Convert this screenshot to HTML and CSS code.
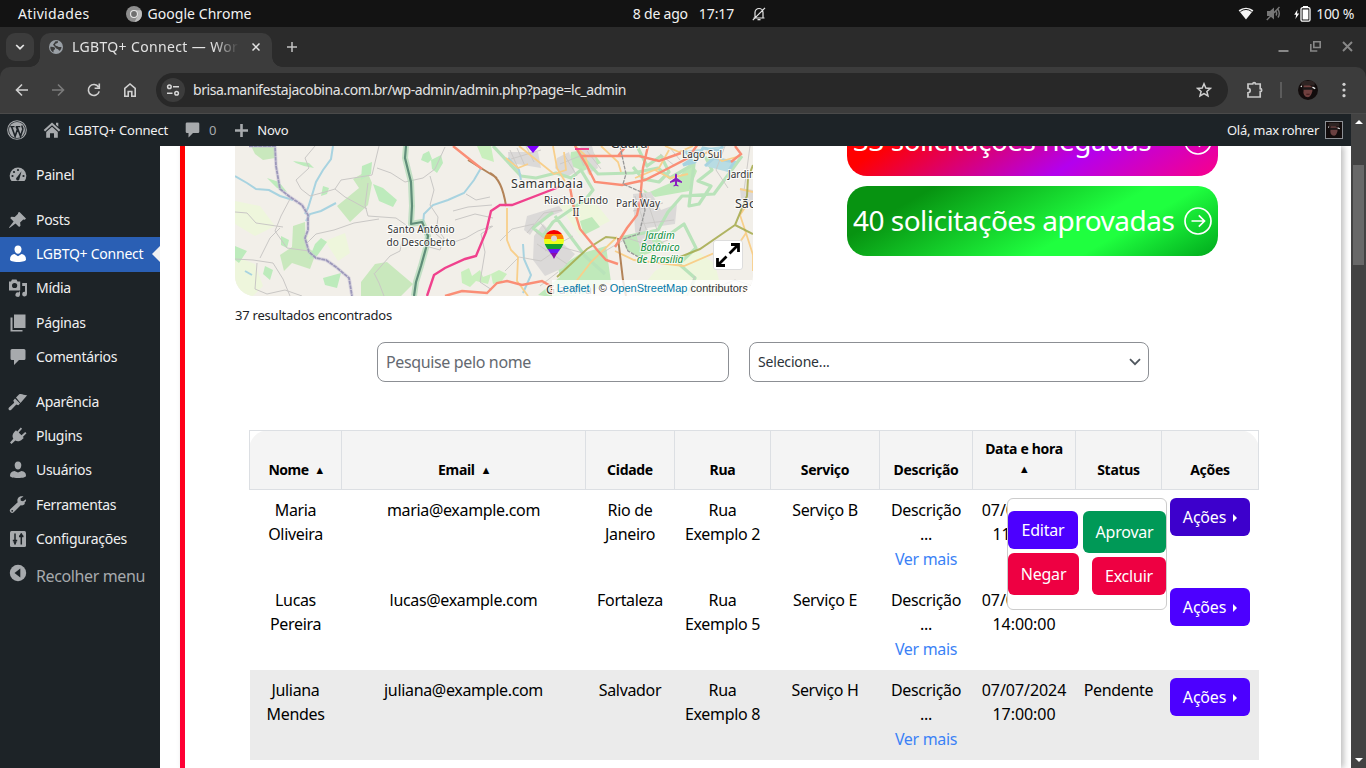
FILE: index.html
```html
<!DOCTYPE html>
<html lang="pt-BR">
<head>
<meta charset="utf-8">
<title>LGBTQ+ Connect</title>
<link rel="stylesheet" href="styles.css">
</head>
<body>
<div class="screen">
  <header class="desktop-bar">
    <div class="db-left">
      <span class="activities">Atividades</span>
      <svg width="16" height="16" viewBox="0 0 16 16"><circle cx="8" cy="8" r="8" fill="#8d8d8d"/><path d="M8 4.2h7A8 8 0 0 1 8.5 16L12 9.5A4 4 0 0 0 8 4.2z" fill="#bdbdbd"/><circle cx="8" cy="8" r="4" fill="#e8e8e8"/><circle cx="8" cy="8" r="2.9" fill="#6f6f6f"/></svg>
      <span class="app-name">Google Chrome</span>
    </div>
    <div class="db-center">
      <span>8 de ago</span><span class="clock">17:17</span>
      <svg width="14" height="14" viewBox="0 0 14 14" fill="none" stroke="#e6e6e6" stroke-width="1.2"><path d="M1.5 11h11M3 10.5V5.5a4 4 0 0 1 8 0v5M.8 13.2 13 .8"/><path d="M5.5 12h3v1.3h-3z" fill="#e6e6e6" stroke="none"/></svg>
    </div>
    <div class="db-right">
      <svg width="16" height="13" viewBox="0 0 16 13"><path d="M8 12.5.6 3.2a12 12 0 0 1 14.8 0z" fill="#f4f4f4"/><path d="M2.400 4.500a9.500 9.500 0 0 1 11.200 0" stroke="#131313" stroke-width="1" fill="none"/></svg>
      <svg class="mute" width="16" height="15" viewBox="0 0 16 15"><path d="M1 5h3l4-3.500v12L4 10H1z" fill="#777"/><path d="M10 5.500q1.300 2 0 4M12 3.500q2.600 4 0 8M.8 14 13.500 1" fill="none" stroke="#777" stroke-width="1.400"/></svg>
      <svg class="batt" width="17" height="16" viewBox="0 0 17 16"><path d="M3.600 3.500.2 8.800h2L1.400 13l3.800-5.400H3z" fill="#fff"/><path d="M9 0h5v2H9z" fill="#fff"/><rect x="7" y="1.700" width="9" height="13.500" rx="1.500" fill="none" stroke="#fff" stroke-width="1.300"/><rect x="8.600" y="3.500" width="5.800" height="10" fill="#fff"/></svg>
      <span>100 %</span>
    </div>
  </header>

  <div class="tab-strip">
    <button class="tab-search"><svg width="10" height="6" viewBox="0 0 10 6"><path d="m1.200 1 3.800 3.700L8.800 1" fill="none" stroke="#e3e3e3" stroke-width="1.700"/></svg></button>
    <div class="tab">
      <svg width="14" height="14" viewBox="0 0 14 14"><circle cx="7" cy="7" r="7" fill="#9aa0a6"/><path d="M1.300 6.800c3-.3 5.200.6 4.700 2.200-.3 1-1.500.9-1.500 1.800v1.700C2.300 11.500 1 9.400 1.300 6.800zM6.500 1.300H9c.3 1.500-.6 2-1.800 2.100C6 3.600 6 4.500 6.300 5.300c.6 1 2 .6 3 1.400.7.500 1.700.2 3.200.2-.1 1.700-.9 3-1.800 3.800-.9.100-1.100-1.600-2.400-1.700C7 8.900 5.500 6.200 4 4.800z" fill="#3c3c3c"/></svg>
      <span class="tab-title">LGBTQ+ Connect — Word</span>
      <svg width="8" height="8" viewBox="0 0 8 8"><path d="m.5.5 7 7m0-7-7 7" stroke="#e3e3e3" stroke-width="1.500"/></svg>
    </div>
    <svg class="plus" width="12" height="12" viewBox="0 0 12 12"><path d="M6 1v10M1 6h10" stroke="#c4c4c4" stroke-width="1.500"/></svg>
    <div class="win">
      <svg width="11" height="12" viewBox="0 0 11 12"><path d="M.5 10h10" stroke="#888" stroke-width="2"/></svg>
      <svg width="11" height="11" viewBox="0 0 11 11" fill="none" stroke="#888" stroke-width="1.600"><path d="M3.800.8h6.400v5.700H3.800zM.8 3v7h6.500"/></svg>
      <svg width="11" height="11" viewBox="0 0 11 11"><path d="m1 1 9 9m0-9-9 9" stroke="#888" stroke-width="1.900"/></svg>
    </div>
  </div>

  <div class="toolbar">
    <svg class="nav" viewBox="0 0 16 16"><path d="M14 8H2.500M8 2.500 2.500 8 8 13.500"/></svg>
    <svg class="nav off" viewBox="0 0 16 16"><path d="M2 8h11.500M8 2.500 13.500 8 8 13.500"/></svg>
    <svg class="nav" viewBox="0 0 16 16"><path d="M13.200 9.400A5.500 5.500 0 1 1 12.500 5M13.300 1.500v4.800H8.600"/></svg>
    <svg class="nav" viewBox="0 0 16 16"><path d="M2.800 6.300 8 2l5.200 4.300v7.900h-3.400V9.500H6.200v4.700H2.800z"/></svg>
    <div class="omnibox">
      <span class="site"><svg width="14" height="12" viewBox="0 0 14 12" fill="none" stroke="#d8d8d8" stroke-width="1.500"><circle cx="3.400" cy="2.800" r="1.800"/><path d="M7 2.800h6M1 9.200h5.500"/><circle cx="10.600" cy="9.200" r="1.800"/></svg></span>
      <span class="url">brisa.manifestajacobina.com.br/wp-admin/admin.php?page=lc_admin</span>
      <svg width="16" height="16" viewBox="0 0 16 16"><path d="m8 1.800 1.800 4.200 4.600.4-3.500 3 1.100 4.500L8 11.500 4 13.900l1.100-4.500-3.500-3L6.200 6z" fill="none" stroke="#d0d0d0" stroke-width="1.500"/></svg>
    </div>
    <svg class="ext" width="18" height="18" viewBox="0 0 18 18"><path d="M2 3h4.700a1.400 1.400 0 0 1 2.800 0h4.700v4.700a1.500 1.500 0 0 1 0 3V16H2v-4.200a2.200 2.200 0 0 0 0-4.400z" fill="none" stroke="#c9c9c9" stroke-width="1.700"/></svg>
    <i class="sep"></i>
    <span class="face round"><svg viewBox="0 0 18 18"><path d="M0 0h18v18H0z" fill="#120c0c"/><path d="M5 5q4-3 7.500 1l.5 4q-1.500 5.500-4 5.500T5.500 13.500 5 9z" fill="#70403f"/><path d="M3 1h12v4H3z" fill="#2e2423"/><path d="M4 6.500h9v2.300H4z" fill="#1d1819"/><path d="M13 6.500l2.500 1.200M2.500 5.500l1 .5" stroke="#eee" stroke-width="1.300"/><path d="M7.500 12.800h3" stroke="#3f1a1b"/></svg></span>
    <svg class="kebab" width="4" height="16" viewBox="0 0 4 16" fill="#d0d0d0"><circle cx="2" cy="2.300" r="1.600"/><circle cx="2" cy="8" r="1.600"/><circle cx="2" cy="13.700" r="1.600"/></svg>
  </div>

  <div class="page">
    <div class="viewport">
      <div class="wp-bar">
        <svg width="20" height="20" viewBox="0 0 20 20"><circle cx="10" cy="10" r="9.300" fill="none" stroke="#a7aaad" stroke-width="1.100"/><circle cx="10" cy="10" r="8" fill="#a7aaad"/><path d="M3.300 6.600h4.200M8.800 6.600h4.500" stroke="#1d2327" stroke-width="1.200"/><path d="m4.600 6.800 3.500 9.500 2.300-6.800-1.100-2.700M10 6.800l3.500 9.500 2.200-6.500c.6-2-.9-2.500-.8-4.300" stroke="#1d2327" stroke-width="1.600" fill="none"/></svg>
        <svg class="home" width="18" height="18" viewBox="0 0 18 18" fill="#a7aaad"><path d="M9 1.500 17.300 9l-1.400 1.400L9 4.200l-6.900 6.200L.7 9zM13 1.800h2.300v4L13 3.800z"/><path d="M9 5.800 14.800 11v5.800H11v-4.500H7v4.500H3.200V11z"/></svg>
        <span class="wp-site">LGBTQ+ Connect</span>
        <svg class="cm" width="15" height="16" viewBox="0 0 15 16" fill="#a7aaad"><path d="M2 .5h11q1.300 0 1.300 1.300v7.900Q14.300 11 13 11H8l-4.500 4.500V11H2Q.7 11 .7 9.700V1.800Q.7.5 2 .5z"/></svg>
        <span class="cnt">0</span>
        <svg class="add" width="13" height="13" viewBox="0 0 13 13"><path d="M6.500 0v13M0 6.500h13" stroke="#a7aaad" stroke-width="2.600"/></svg>
        <span class="wp-new">Novo</span>
        <span class="hello">Olá, max rohrer</span>
        <span class="face square"><svg viewBox="0 0 18 18"><path d="M0 0h18v18H0z" fill="#120c0c"/><path d="M5 5q4-3 7.500 1l.5 4q-1.500 5.500-4 5.500T5.500 13.500 5 9z" fill="#6b4040"/><path d="M3 1h12v4H3z" fill="#2e2423"/><path d="M4 6.500h9v2.300H4z" fill="#1d1819"/><path d="M13 6.500l2.500 1.200M2.500 5.500l1 .5" stroke="#eee" stroke-width="1.300"/></svg></span>
      </div>

      <div class="wp-body">
        <nav class="side">
          <a class="gap"><svg viewBox="0 0 20 20"><path d="M3.500 16A8.300 8.300 0 1 1 16.500 16z"/><g fill="#1d2327"><circle cx="4.500" cy="11" r="1.100"/><circle cx="6" cy="7" r="1.100"/><circle cx="10" cy="5" r="1.100"/><circle cx="15.500" cy="11" r="1.100"/><path d="m13.500 6.300-2 7.500a1.700 1.700 0 1 1-2.500-1.500z"/></g></svg>Painel</a>
          <a><svg viewBox="0 0 20 20"><path d="m11.500 2 6.500 6.500-1.200 1.200-1.500-.3-3.200 3.200.4 3.200-1.400 1.200-3.600-3.600L1.500 18 1 17.500l4.600-6L2.200 8l1.200-1.300 3.300.4 3.400-3.400-.2-1z"/></svg>Posts</a>
          <a class="on"><svg viewBox="0 0 20 20"><path d="M10 1.500c2.400 0 3.700 1.800 3.500 4-.2 2.600-1.500 4.300-3.500 4.300S6.700 8.100 6.500 5.500c-.2-2.200 1.100-4 3.500-4zM6.500 10 10 12.200l3.500-2.200c3 .3 4.500 2.300 4.500 5.500 0 1.500-3 2.500-8 2.500s-8-1-8-2.500c0-3.200 1.500-5.200 4.500-5.500z"/></svg>LGBTQ+ Connect</a>
          <a><svg viewBox="0 0 20 20"><path d="M1 3.500h2L4 1.500h4.500l1 2h2.700v9H1zM14.200 5H19v11a2.400 2.400 0 1 1-2-2.300V8h-2.800zM12 13v4a2.300 2.300 0 1 1-1.500-2.600z"/><circle cx="6.600" cy="7.500" r="2.600" fill="#1d2327"/></svg>Mídia</a>
          <a><svg viewBox="0 0 20 20"><path d="M6 1.500h11.500V15H6zM2.500 4.500h2V17h10v1.500h-12z"/></svg>Páginas</a>
          <a class="gap"><svg viewBox="0 0 20 20"><path d="M4 2h12q1.500 0 1.500 1.500v8Q17.500 13 16 13h-5l-5 5v-5H4q-1.500 0-1.500-1.500v-8Q2.500 2 4 2z"/></svg>Comentários</a>
          <a><svg viewBox="0 0 20 20"><path d="m8 5.500 3.200-3.200c3.200-1 5.300 1.500 8 1L12.500 11zM7 6.500l5 5-1.700 1.700-2-.7-5 5.300q-1.500 1-2.500 0-.8-1.300.2-2.300l5.200-4.800-.9-2.300z"/></svg>Aparência</a>
          <a><svg viewBox="0 0 20 20"><path d="m12.800 1.500 1.300 1.300-3.400 3.700 2.800 2.800 3.700-3.400 1.300 1.300-3.700 3.700 1 1-1.500 1.400c-2.300 2.300-5 2.600-7 1.300L3.500 18 2 16.500l3.300-3.800C4 10.500 4.300 8 6.500 5.700L8 4.300l1.200 1.200z"/></svg>Plugins</a>
          <a><svg viewBox="0 0 20 20"><path d="M10 1.500c2.400 0 3.500 1.800 3.300 4-.2 2.500-1.400 4-3.300 4s-3.100-1.500-3.300-4c-.2-2.200.9-4 3.300-4zM6.500 11 10 12.500l3.500-1.500c3 .3 4.500 2 4.500 4.700 0 1.300-3 2.300-8 2.300s-8-1-8-2.300C2 13 3.500 11.300 6.500 11z"/></svg>Usuários</a>
          <a><svg viewBox="0 0 20 20"><path d="M16.700 7.300c1-.8 1.500-1.500 1.300-3l-3 2-2.200-.6L12.500 3.500l3-1.900c-2-.7-4.300-.2-5.500 1.700-.8 1.300-.8 2.700-.3 4L2.500 14a2.300 2.300 0 0 0 3.200 3.300l7-7c1.500.4 3 0 4-1.200z"/><circle cx="4.200" cy="15.800" r=".9" fill="#1d2327"/></svg>Ferramentas</a>
          <a><svg viewBox="0 0 20 20"><path d="M3.500 2h13Q18 2 18 3.500v13q0 1.500-1.500 1.500h-13Q2 18 2 16.500v-13Q2 2 3.500 2z"/><path d="M7 4.500v11M4.800 11.500h4.400M13.300 4.500v11M11 7.500h4.500" stroke="#1d2327" stroke-width="1.500"/><path d="m5 12.500 2 3 2-3zM11 7l2.300-3 2.200 3z" fill="#1d2327"/></svg>Configurações</a>
          <a class="collapse"><svg viewBox="0 0 20 20"><circle cx="10" cy="10" r="8.200"/><path d="M12.300 5.500v9L6.500 10z" fill="#1d2327"/></svg>Recolher menu</a>
        </nav>

        <main class="main">
          <section class="panel">
            <div class="overview">
              <div class="map">
                <svg width="518" height="150" viewBox="0 0 518 150">
                  <rect width="518" height="150" fill="#f2efe9"/>
                  <g fill="#eef6dc">
                    <path d="M0 55 25 60 40 80 20 90 0 78zM90 95l20-8 5 20-12 8zM0 110l20 8 8 22-10 10H0zM420 125l40-22 20 15 8 32H400zM325 60l30-10 20 25-30 15zM60 85l14 4-4 20-12-6z"/>
                  </g>
                  <g fill="#c9e8bd">
                    <path d="M16 0h24v12l-12 2-8-6zM102 60l22-18-6-9 14-8 5 12-4 22-18 17zM58 80l12-4 1 25 10 6-6 16-18-6-8 8-4-16 12-8zM140 118l12-2 26 22-12 12h-40v-14z"/>
                    <path d="M127 20l10-4-1 12-10 6zM138 38l10 4 14 12-4 7-14-6zM88 132l18-5-4 15-12-3zM0 100l12 5-8 12-4-3zM58 15l16 2 5 5-10-2-8-3zM80 98l6-6 6 4-10 14-8 3zM32 32l12 4 8 10-10-4zM46 90l8 4-2 8-6-3zM188 8l6-3 3 8-4 4-7-3zM196 14l10-5 2 8-6 10-5-4zM30 120l8 4-3 10-7-6zM88 40l6 2-2 6-6 2z" fill="#bdebbc"/>
                  </g>
                  <g fill="#bfe9ba">
                    <path d="M323 122l22-14 26-8 5 36-24 12-30 4-19-3 22-18zM345 75l12-4 8 10-16 8zM336 6l20-3 10 14-18 8-14-6zM410 48l30-13 16-18 6 8-8 20-34 6-12-8zM387 92l30-4 12 9-14 10 -12 4-12-8z"/>
                    <path d="M226 126l8-4 3 8 8-6 3 7 8-3-3 10-12-3-6 6-8-4zM256 128l8-4 8 4-6 8-8 2zM242 0h14l3 16-12-4z" fill="#c9efbd"/>
                  </g>
                  <g fill="#dbd9d8">
                    <path d="M273 6h30l3 16-18-3-14-2zM322 12l12-6 6 20-10 6-10-10zM308 78l18 18 14 12-12 14-18 8-12-16 1-24zM398 48l18-2 10 18 16-6-2 20-28 4 8 20-14 3-6-20zM292 70l32-10 4 5-24 10-9 14-6-5zM345 0h12l6 22-10 6zM505 42l13 2v14l-12-4z"/>
                  </g>
                  <g fill="none" stroke="#b9e3ba" stroke-width="3.200" stroke-linejoin="round">
                    <path d="M258 0l28 30 15 2 20-5 15 5 10-8 12 20-8 10-32 22-10 14-10-8 20-16M320 70l30 40 20 18M345 8l18 20 35-1 25-5 12 10 24-14-5 42 10-2 12-18-13-5 14-11-6-12 26 8M385 92l38-8 10-18 14-16 32-2 28-38M435 88l14-10 12 24-17 16 16 14-6 14"/>
                    <path d="M402 0l10 20 14-10 8 16-10 10-16-3-10-12"/>
                  </g>
                  <g fill="none" stroke="#a8d3e0" stroke-width="2">
                    <path d="M98 0 96 13 88 24 81 36 78 46 73 62 70 68M0 30 12 37 21 43 34 44 45 50 58 54M101 57 86 65 75 68 71 75M246 22 239 34 229 47 213 54 198 59 189 68 188 78M273 12l11 12 2 10M288 98l1 15 7 16-8 18M10 125l7 4"/>
                  </g>
                  <path d="m450 5 7 8-9 6 12-3 8-14 16 3 4-5M470 20l9-8 20 4-6 10" fill="#b8dce3" stroke="#a8d3e0" stroke-width="3"/>
                  <g fill="none" stroke="#c9c7c5" stroke-width="1">
                    <path d="M80 0 70 12 74 22 61 34 66 43 75 50 90 46 100 43 106 34 137 29 144 0M133 37l-3 22 3 11 28 2 10 7M142 22l14 5 14 9 18-4 12-9 10-22M100 43l10 8 22 12M0 66l12 1 9 10 27 4M55 53 46 70l-6 15 12 17 22 3M71 98l10-10 18-4 20-7 25-4M25 112l10-20 10-10M0 113l18 1 20 3 10 16 7 17M22 117l-2 26 12 5 18-4 17 6M140 127l15-17 10-5 2-10M139 127l5 10 5 13M195 30l4 14-4 15 8 12-2 17 12 10 18-6 12-7 14-5M218 65l15-4 24-2M220 74l20-6 18 4M200 80l9 12-4 12-14-4M258 80l-12 8 4 18-5 30 12 8M231 48l10 6 14-3"/>
                    <path d="M275 4l8 18M282 2l8 18M291 0l8 16M276 13l30-9M330 10l12 20M325 18l20-8M340 0l9 20M300 85l25 20M304 75l22 28M310 105l28-15M302 98l30 20M400 50l15 45M410 48l12 36M398 65l30-8M405 78l34-4M415 93l15-4M425 8l15 12M435 2l10 12M352 5l14 18M292 87l17-20 18-3M265 95l12-12 22-5M270 125l14-14 22 4 20-14 22 6M305 140l18-14M362 110l30-18 25 8 16-6M460 130l-8 20M480 142l20-8 18 6M490 0l-9 24 12 18M515 0l-6 45" stroke-width=".9"/>
                  </g>
                  <g fill="none" stroke="#f8cf8b" stroke-width="1.800">
                    <path d="M284 0l15 12 20 16 12-4-2-18M318 0l4 22 9 15M272 62v32l4 10 7 7-1 24 11 15M271 12l12 10 10-4M340 0l10 9 5 20M366 0l17 16 3 10M380 105l19 9 50 6 56-24 6-9-6-18 8-12M505 43l13 3M511 87l7 22 0 16M400 32l24-10 10-18M430 0l14 6 14-6M370 137l35 10M330 150l26-34 26-25M460 14l14-9 13 10 18-5M420 24l15 8 18-4"/>
                  </g>
                  <path d="M518 19 513 32 512 50 500 79l18 9M500 79l-35 24-20 8-15 3M322 131l30-28 19-12 10 1" fill="none" stroke="#a5a94a" stroke-width="2" opacity=".85"/>
                  <path d="M233 14 262 32M255 27q12 6 16 33M383 92l5 42 3 16" fill="none" stroke="#b38358" stroke-width="2"/>
                  <g fill="none" stroke="#fa8e76" stroke-width="2.400">
                    <path d="M218 0 233 12 247 23M340 0l12 20 8 16 27 3 23-5 18-9 25-13 10-14M413 0l-5 22-3 33-3 14-10 13-12 19M334 36l5 27 6 20 18 22 8 9 12 4M210 150l17-5 25 2 10-10 10-2 15 4 20-4 10 6-1 8M346 10h37l8-10M380 10h24l20 5 22-8M500 0l6 8-10 8"/>
                  </g>
                  <path d="M192 150l7-21 11-7 20-9 11-3 10-24 5-21 9-6 12 0 47-18" fill="none" stroke="#f0418d" stroke-width="2.400"/>
                  <path d="M340 3h14" stroke="#f0418d" stroke-width="2"/>
                  <g fill="none" stroke-linejoin="round">
                    <path d="M14 0h26l1 20 4 23 10 8 12 8 6 10 0 15-3 8 4 14 7 6 10 2 10 7 13 11 3 18" stroke="#c7c1d8" stroke-width="3.500" opacity=".5"/>
                    <path d="M14 0h26l1 20 4 23 10 8 12 8 6 10 0 15-3 8 4 14 7 6 10 2 10 7 13 11 3 18" stroke="#9c98ba" stroke-width="1.800" stroke-dasharray="4 .6"/>
                    <path d="M171 0l-1 12 6 24 1 24-1 18 11-2 6 14-2 12-5 18-5 16-2 14" stroke="#a3d6ae" stroke-width="6" opacity=".6"/>
                    <path d="M171 0l-1 12 6 24 1 24-1 18 11-2 6 14-2 12-5 18-5 16-2 14" stroke="#5f8d79" stroke-width="2.200"/>
                    <path d="M385 0l6 28-3 10 18 8 4 18-6 24-16 5 5 12 14 8" stroke="#999" stroke-width="1.300" stroke-dasharray="4 1"/>
                  </g>
                  <g font-family="Noto Sans, sans-serif" fill="#333" stroke="#fff" stroke-opacity=".75" stroke-width="2.200" paint-order="stroke" text-anchor="middle" font-size="10">
                    <text x="186" y="87" textLength="67">Santo Antônio</text><text x="186" y="100" textLength="69">do Descoberto</text>
                    <text x="394" y="2" font-size="12.500" textLength="37">Guará</text>
                    <text x="312" y="42" font-size="12.500" textLength="72">Samambaia</text>
                    <text x="341" y="58" textLength="64">Riacho Fundo</text><text x="341" y="70">II</text>
                    <text x="403" y="61" textLength="44">Park Way</text>
                    <text x="467" y="12" textLength="40">Lago Sul</text>
                    <text x="493" y="32" text-anchor="start">Jardim</text>
                    <text x="500" y="62" text-anchor="start" font-size="12.500">São</text>
                    <text x="334" y="148" font-size="12.500" textLength="46">Gama</text>
                    <g font-style="italic" fill="#0b8f3c"><text x="425" y="93">Jardim</text><text x="425" y="105">Botânico</text><text x="425" y="117">de Brasília</text></g>
                  </g>
                  <path d="M441 27.500q1 .3 1 1.500v3l5 3.500v1.500l-5-1.500v3l1.500 1v1l-2.500-.7-2.500.7v-1l1.500-1v-3l-5 1.500v-1.500l5-3.500v-3q0-1.200 1-1.500z" fill="#8a1fbf"/>
                  <path d="M292 0h12l-6 7z" fill="#8000ff"/>
                  <clipPath id="pin"><path d="M319 84a10 10 0 0 1 10 10c0 7-7 12-10 19-3-7-10-12-10-19a10 10 0 0 1 10-10z"/></clipPath>
                  <g clip-path="url(#pin)"><path d="M305 83h28v5h-28z" fill="#f40000"/><path d="M305 88h28v5h-28z" fill="#ff8400"/><path d="M305 93h28v5h-28z" fill="#ecff1a"/><path d="M305 98h28v5h-28z" fill="#12a02c"/><path d="M305 103h28v5h-28z" fill="#6a16f4"/><path d="M305 107h28v7h-28z" fill="#8a0fa8"/><circle cx="319" cy="92.500" r="3" fill="#d9d7d6"/></g>
                </svg>
                <div class="expand"><svg width="24" height="24" viewBox="0 0 24 24" fill="none" stroke="#000" stroke-width="2.800"><path d="M15 1.500h7.500V9M22 2l-8.500 8.500M9 22.500H1.500V15M2 22l8.500-8.500"/></svg></div>
                <div class="credit"><a>Leaflet</a> | © <a>OpenStreetMap</a> contributors</div>
              </div>
              <div class="cards">
                <div class="card denied"><span>33 solicitações negadas</span><svg width="28" height="28" viewBox="0 0 28 28"><circle cx="14" cy="14" r="13"/><path d="M7.500 14h13M14.800 8.300l5.700 5.700-5.700 5.700"/></svg></div>
                <div class="card approved"><span>40 solicitações aprovadas</span><svg width="28" height="28" viewBox="0 0 28 28"><circle cx="14" cy="14" r="13"/><path d="M7.500 14h13M14.800 8.300l5.700 5.700-5.700 5.700"/></svg></div>
              </div>
            </div>
            <p class="found">37 resultados encontrados</p>
            <div class="filters">
              <div class="field name">Pesquise pelo nome</div>
              <div class="field choose"><span>Selecione...</span><svg width="12" height="8" viewBox="0 0 12 8"><path d="m1 1.200 5 5 5-5" fill="none" stroke="#50575e" stroke-width="1.800"/></svg></div>
            </div>
            <table class="grid">
              <thead>
                <tr><th>Nome <b>▲</b></th><th>Email <b>▲</b></th><th>Cidade</th><th>Rua</th><th>Serviço</th><th>Descrição</th><th class="two"><span>Data e hora</span><b>▲</b></th><th>Status</th><th>Ações</th></tr>
              </thead>
              <tbody>
                <tr><td>Maria<br>Oliveira</td><td>maria@example.com</td><td>Rio de<br>Janeiro</td><td>Rua<br>Exemplo 2</td><td>Serviço B</td><td>Descrição<br>...<br><a>Ver mais</a></td><td class="num">07/07/2024<br>11:00:00</td><td>Pendente</td>
                  <td class="act"><button class="btn open">Ações <i></i></button>
                    <div class="pop">
                      <div class="pop-row"><button class="edit">Editar</button><button class="approve">Aprovar</button></div>
                      <div class="pop-row low"><button class="deny">Negar</button><button class="remove">Excluir</button></div>
                    </div></td></tr>
                <tr><td>Lucas<br>Pereira</td><td>lucas@example.com</td><td>Fortaleza</td><td>Rua<br>Exemplo 5</td><td>Serviço E</td><td>Descrição<br>...<br><a>Ver mais</a></td><td class="num">07/07/2024<br>14:00:00</td><td>Pendente</td><td class="act"><button class="btn">Ações <i></i></button></td></tr>
                <tr class="shade"><td>Juliana<br>Mendes</td><td>juliana@example.com</td><td>Salvador</td><td>Rua<br>Exemplo 8</td><td>Serviço H</td><td>Descrição<br>...<br><a>Ver mais</a></td><td class="num">07/07/2024<br>17:00:00</td><td>Pendente</td><td class="act"><button class="btn">Ações <i></i></button></td></tr>
              </tbody>
            </table>
          </section>
        </main>
      </div>
    </div>
    <div class="scroll"><i class="up"></i><i class="thumb"></i><i class="down"></i></div>
  </div>
</div>
</body>
</html>
```

FILE: styles.css
```css
*{box-sizing:border-box}
body{margin:0;font-family:"Noto Sans","Open Sans",sans-serif;background:#fff}
svg{display:block;flex:none}
button{font:inherit;letter-spacing:inherit;border:0;padding:0}
.screen{width:1366px;height:768px;overflow:hidden;display:flex;flex-direction:column;background:#2b2b2b}

/* desktop bar */
.desktop-bar{height:27px;flex:none;background:#131313;color:#f2f2f2;font-size:14px;display:grid;grid-template-columns:1fr auto 1fr;align-items:center}
.desktop-bar span{padding-bottom:1px}
.db-left,.db-center,.db-right{display:flex;align-items:center}
.activities{margin:0 36px 0 18px;letter-spacing:.35px}
.app-name{margin-left:6px;letter-spacing:.05px}
.db-center{letter-spacing:-.22px;padding-left:33px}
.clock{margin:0 18px 0 11px;letter-spacing:-.1px}
.db-right{justify-content:flex-end;padding-right:12px;letter-spacing:-.3px}
.mute{margin:0 12px}
.batt{margin-right:5px}

/* browser */
.tab-strip{height:40px;flex:none;background:#2b2b2b;display:flex;align-items:center;padding-left:6px}
.tab-search{width:28px;height:28px;border-radius:9px;background:#3c3c3c;display:flex;align-items:center;justify-content:center}
.tab{position:relative;align-self:flex-end;width:232px;height:34px;margin-left:6px;background:#3c3c3c;border-radius:10px 10px 0 0;display:flex;align-items:center;padding:0 15px 6px 9px;color:#e3e3e3;font-size:14px}
.tab::before,.tab::after{content:"";position:absolute;bottom:0;width:10px;height:10px}
.tab::before{left:-10px;background:radial-gradient(circle at 0 0,transparent 9.500px,#3c3c3c 10px)}
.tab::after{right:-10px;background:radial-gradient(circle at 100% 0,transparent 9.500px,#3c3c3c 10px)}
.tab-title{width:167px;margin:0 13px 0 9px;padding-bottom:1px;letter-spacing:.36px;white-space:nowrap;overflow:hidden;-webkit-mask-image:linear-gradient(90deg,#000 142px,transparent 167px);mask-image:linear-gradient(90deg,#000 142px,transparent 167px)}
.tab svg,.tab-title{flex:none}
.plus{margin-left:14px}
.win{margin-left:auto;display:flex;gap:21px;padding-right:13px}
.toolbar{height:47px;flex:none;background:#3c3c3c;border-bottom:1px solid #4a4a4a;border-radius:10px 10px 0 0;display:flex;align-items:center;padding-left:14px}
.nav{width:16px;height:16px;margin-right:20px;fill:none;stroke:#d0d0d0;stroke-width:1.600}
.off{stroke:#7b7b7b}
.omnibox{width:1072px;height:34px;margin-left:-2px;border-radius:17px;background:#282828;display:flex;align-items:center;padding:0 16px 0 5px}
.site{width:24px;height:24px;border-radius:50%;background:#3c3c3c;display:flex;align-items:center;justify-content:center}
.url{margin-left:8px;margin-right:auto;padding-bottom:2px;color:#e3e3e3;font-size:14px;letter-spacing:-.44px}
.ext{margin-left:18px}
.sep{width:2px;height:16px;background:#5c5c5c;margin:0 16px 0 16px}
.face{display:block;overflow:hidden}
.round{width:20px;height:20px;border-radius:50%}
.face svg{width:100%;height:100%}
.kebab{margin-left:24px}

.page{flex:1;min-height:0;display:flex}
.viewport{flex:1;min-width:0;display:flex;flex-direction:column;background:#fff}
.scroll{width:15px;background:#424242;display:flex;flex-direction:column;align-items:center}
.up{margin-top:6px;border:4px solid transparent;border-top:0;border-bottom:4px solid #fff}
.thumb{width:11px;height:100px;margin-top:41px;background:#686868}
.down{margin-top:auto;margin-bottom:6px;border:4px solid transparent;border-bottom:0;border-top:4px solid #fff}

/* admin bar */
.wp-bar{height:32px;flex:none;background:#1d2327;color:#f0f0f1;font-size:13px;letter-spacing:-.2px;display:flex;align-items:center;padding-left:7px}
.home{margin-left:16px}
.wp-site{margin-left:7px}
.cm{margin-left:17px}
.cnt{margin-left:9px;color:#a7aaad}
.add{margin-left:19px}
.wp-new{margin-left:9px}
.hello{margin-left:auto;letter-spacing:-.28px}
.square{width:18px;height:18px;border:1px solid #8c8f94;margin:0 8px 0 6px}

.wp-body{flex:1;min-height:0;display:flex}
.side{width:160px;flex:none;background:#1d2327;padding-top:11.500px}
.side a{height:34.250px;display:flex;align-items:center;padding:0 0 1px 8px;font-size:14px;letter-spacing:-.3px;color:#f0f0f1}
.side svg{width:20px;height:20px;margin:1px 8px 0 0;fill:#a7aaad}
.side .gap{margin-bottom:10.800px}
.side .on{position:relative;height:35px;margin-bottom:-.500px;letter-spacing:-.24px;background:#2a5fb4;color:#fff}
.side .on::after{content:"";position:absolute;right:0;top:9px;border:8px solid transparent;border-left:0;border-right-color:#f0f0f1}
.side .on svg{fill:#fff}
.side .collapse{margin-top:3px;font-size:16px;letter-spacing:-.38px;color:#a7aaad}
.side .collapse svg{margin-top:-5px}

/* content */
.main{flex:1;min-width:0;padding:0 10px 0 20px;overflow:hidden;background:#fff}
.panel{height:100%;padding-left:50px;border-left:5px solid;border-image:linear-gradient(#f00,#ff0036) 1;box-shadow:3px 0 6px rgba(0,0,0,.25);background:#fff}
.overview{display:flex;gap:94px}
.map{position:relative;width:518px;height:150px;overflow:hidden;border-radius:0 0 20px 20px}
.expand{position:absolute;right:10px;bottom:26px;width:30px;height:30px;border:1px solid #ddd;border-radius:3px;background:#fff;display:flex;align-items:center;justify-content:center}
.credit{position:absolute;right:0;bottom:0;height:16px;padding:0 5px;background:rgba(255,255,255,.8);font:11px/16px "Liberation Sans",Arial,sans-serif;color:#333;white-space:nowrap}
.credit a{color:#0078a8}
.cards{width:371px;margin-top:-40px;display:flex;flex-direction:column;gap:10px}
.card{height:70px;flex:none;border-radius:20px;display:flex;align-items:center;justify-content:space-between;padding:0 6px;color:#fff;font-size:28px;letter-spacing:-.51px;white-space:nowrap}
.card span{padding-bottom:2px}
.card svg{fill:none;stroke:#fff;stroke-width:1.700}
.denied{background:linear-gradient(146deg,#f00 20%,#b300ee 65%,#f9008a)}
.approved{background:linear-gradient(150deg,#079311 18%,#1fff3f 62%,#1fff3f 72%,#00a91c 100%)}
.found{margin:9px 0 0;font-size:13px;line-height:20px;letter-spacing:-.22px;color:#1d2327}
.filters{display:flex;gap:20px;margin:17px 0 0 142px}
.field{height:40px;border:1px solid #8c8f94;border-radius:8px;display:flex;align-items:center}
.name{width:352px;padding-left:8px;font-size:16px;letter-spacing:-.36px;color:#646970}
.choose{width:400px;justify-content:space-between;padding:0 7px 1px 8px;font-size:14px;letter-spacing:-.18px;color:#2c3338}

.grid{display:block;width:1010px;margin:48px 0 0 14px;text-align:center;color:#000}
.grid thead,.grid tbody{display:block}
.grid tr{display:grid;grid-template-columns:92px 244px 89px 96px 109px 93px 103px 86px 98px;height:90px}
.grid thead tr{height:60px;grid-template-rows:60px;background:#f4f4f4;border-radius:20px 20px 0 0}
.grid th{display:flex;justify-content:center;align-items:flex-end;gap:8px;padding:0 0 9px;border:1px solid #dcdfe3;border-right:0;font-size:14px;line-height:21px;letter-spacing:-.3px}
.grid th:first-child{letter-spacing:-.5px}
.grid th:last-child{border-right:1px solid #dcdfe3}
.grid .two{flex-direction:column;align-items:center;justify-content:flex-end;gap:0}
.grid th b{font-size:8.500px;font-weight:400;line-height:19px;font-family:"DejaVu Sans",sans-serif}
.grid .two b{line-height:21px}
.grid td{padding:8px 0 0 1px;font-size:16px;line-height:24.400px;letter-spacing:-.33px}
.grid .num{letter-spacing:-.05px}
.grid td a{color:#3b82f6}
.grid .shade{background:linear-gradient(90deg,transparent 1px,#ebebeb 1px)}
.grid .act{position:relative;padding-left:9px;text-align:left;line-height:normal;letter-spacing:-.2px}
.btn{width:80px;height:38px;border-radius:6px;background:#4c00ff;color:#fff;display:flex;align-items:center;justify-content:center}
.btn i{margin-left:7px;margin-top:2px;border:4px solid transparent;border-right:0;border-left-color:#fff}
.open{background:#3d00cc}
.pop{position:absolute;z-index:2;top:8px;right:92px;width:160px;height:112px;padding-top:12px;border:1px solid #ccc;border-radius:6px;background:#fff}
.pop-row{height:42px;display:flex;justify-content:space-between;align-items:flex-start}
.low{align-items:flex-end}
.pop button{border-radius:6px;color:#fff}
.edit{width:70px;height:38px;background:#4c00ff}
.approve{width:83px;height:42px;background:#009957}
.deny{width:71px;height:42px;background:#ee0042}
.remove{width:74px;height:38px;background:#ee0042}
```
